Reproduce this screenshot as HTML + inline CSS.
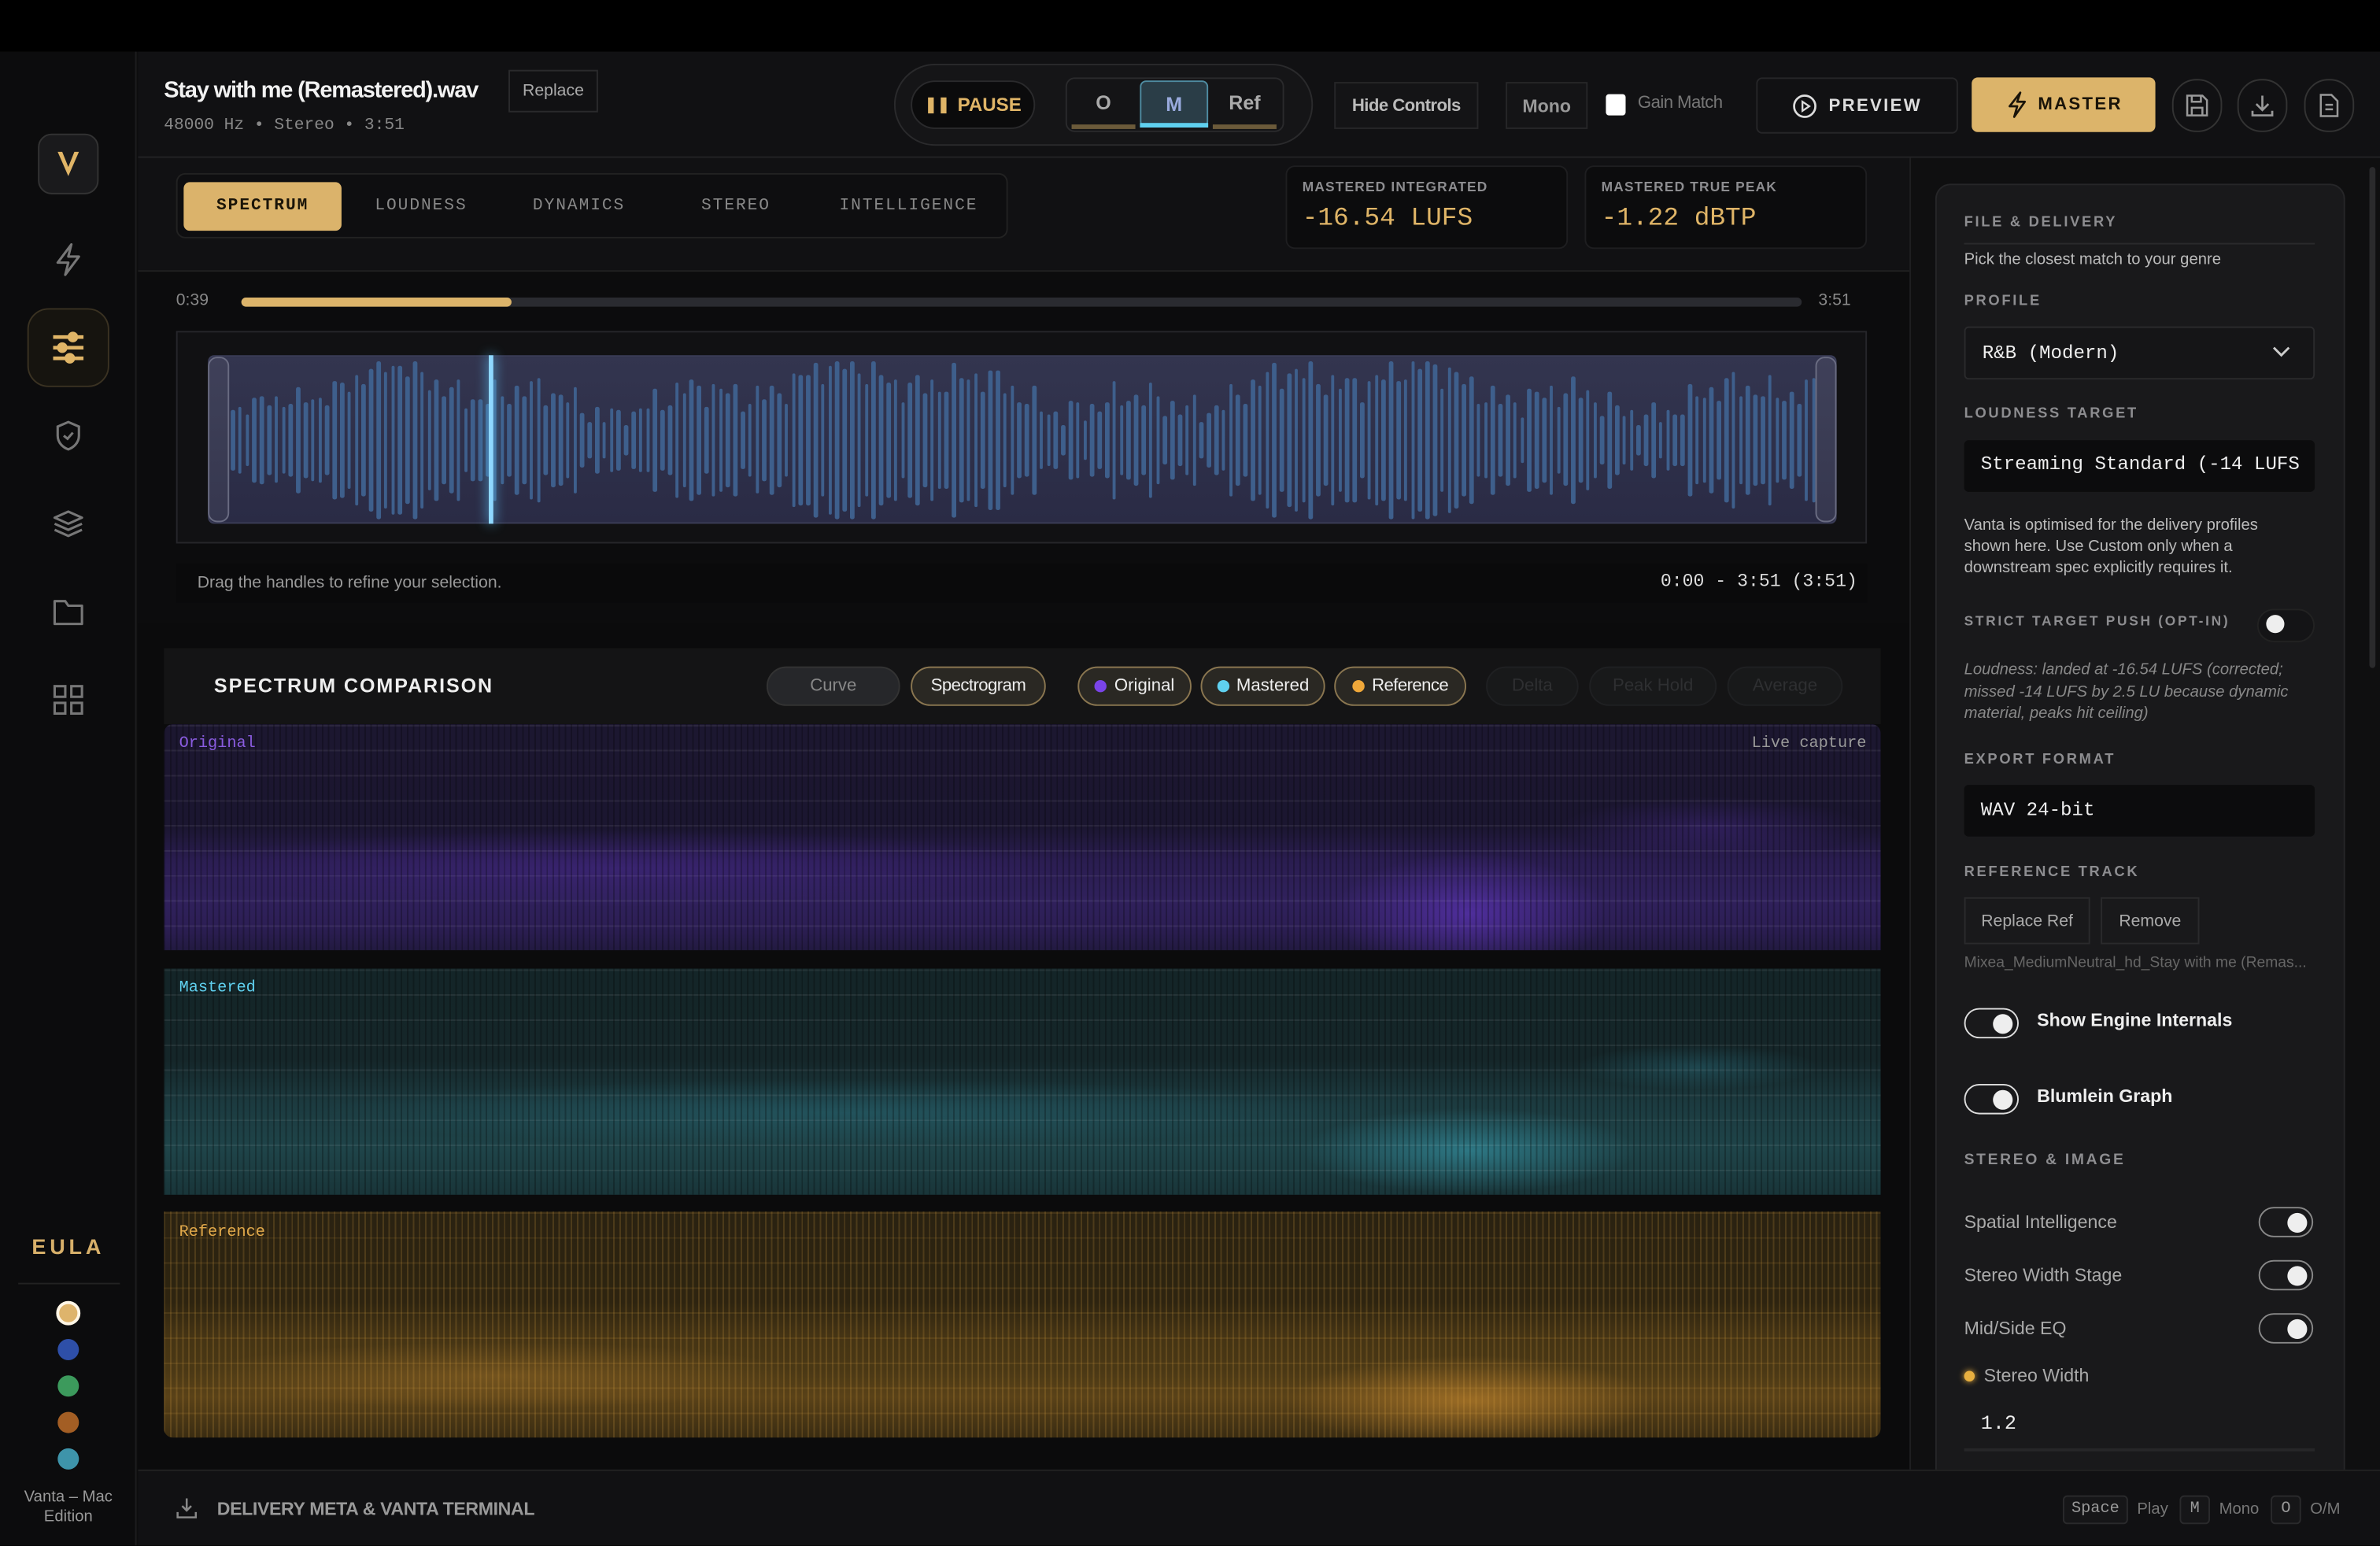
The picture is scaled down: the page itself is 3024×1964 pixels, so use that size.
<!DOCTYPE html>
<html><head><meta charset="utf-8">
<style>
*{box-sizing:border-box;margin:0;padding:0}
html,body{width:3024px;height:1964px;overflow:hidden;background:#000}
#s{width:1568px;height:1018px;transform:scale(1.92857);transform-origin:0 0;position:relative;background:#0d0d0e;font-family:"Liberation Sans",sans-serif;color:#ddd}
.a{position:absolute}
.mono{font-family:"Liberation Mono",monospace}
.lbl{font-size:9.5px;font-weight:bold;letter-spacing:1.4px;color:#8d8d90}
.pill{position:absolute;height:26px;border-radius:13px;font-size:11.5px;display:flex;align-items:center;justify-content:center;gap:5px}
.dot{width:8px;height:8px;border-radius:50%}
.tg{position:absolute;width:36px;height:20px;border-radius:10px;border:1.5px solid #888}
.tg:after{content:"";position:absolute;right:3px;top:2.5px;width:13px;height:13px;border-radius:50%;background:#eee}
.grid{background-image:repeating-linear-gradient(90deg,rgba(0,0,0,.25) 0 1px,transparent 1px 4px),repeating-linear-gradient(0deg,transparent 0 15.5px,rgba(255,255,255,.07) 15.5px 16.5px)}
</style></head><body><div id="s">
<div class="a" style="left:0;top:0;width:1568px;height:34px;background:#000"></div>
<div class="a" style="left:0;top:34px;width:90px;height:984px;background:#0c0c0d;border-right:1px solid #1d1d1f"></div>
<div class="a" style="left:25px;top:88px;width:40px;height:40px;border-radius:9px;background:#1a1a1c;border:1px solid #333;display:flex;align-items:center;justify-content:center">
<svg width="22" height="22" viewBox="0 0 22 22"><path d="M4 3 L11 19 L18 3 L15 3 L11 13 L7 3Z" fill="#e0b567"/></svg></div>
<svg class="a" style="left:34px;top:159px" width="22" height="24" viewBox="0 0 22 24"><path d="M13 2 L4 14 L11 14 L9 22 L18 10 L11 10Z" fill="none" stroke="#777" stroke-width="1.6" stroke-linejoin="round"/></svg>
<div class="a" style="left:18px;top:203px;width:54px;height:52px;border-radius:14px;border:1px solid #3a3222;background:#16140f"></div>
<svg class="a" style="left:33px;top:217px" width="24" height="24" viewBox="0 0 24 24"><g stroke="#e0b567" stroke-width="2.4"><line x1="2" y1="5" x2="22" y2="5"/><line x1="2" y1="12" x2="22" y2="12"/><line x1="2" y1="19" x2="22" y2="19"/></g><circle cx="15" cy="5" r="3.5" fill="#e0b567"/><circle cx="8" cy="12" r="3.5" fill="#e0b567"/><circle cx="13" cy="19" r="3.5" fill="#e0b567"/></svg>
<svg class="a" style="left:35px;top:276px" width="20" height="22" viewBox="0 0 20 22"><path d="M10 2 L17 5 V11 C17 16 13 19 10 20 C7 19 3 16 3 11 V5Z" fill="none" stroke="#777" stroke-width="1.6"/><path d="M7 11 L9.5 13 L13 9" fill="none" stroke="#777" stroke-width="1.6"/></svg>
<svg class="a" style="left:34px;top:335px" width="22" height="20" viewBox="0 0 22 20"><path d="M11 2 L20 6 L11 10 L2 6Z M2 10 L11 14 L20 10 M2 14 L11 18 L20 14" fill="none" stroke="#777" stroke-width="1.6" stroke-linejoin="round"/></svg>
<svg class="a" style="left:34px;top:393px" width="22" height="20" viewBox="0 0 22 20"><path d="M2 3 H9 L11 6 H20 V18 H2Z" fill="none" stroke="#777" stroke-width="1.6" stroke-linejoin="round"/></svg>
<svg class="a" style="left:35px;top:451px" width="20" height="20" viewBox="0 0 20 20"><g fill="none" stroke="#777" stroke-width="1.6"><rect x="1" y="1" width="7" height="7"/><rect x="12" y="1" width="7" height="7"/><rect x="1" y="12" width="7" height="7"/><rect x="12" y="12" width="7" height="7"/></g></svg>
<div class="a" style="left:0;top:813px;width:90px;text-align:center;font-size:14px;font-weight:bold;letter-spacing:2.5px;color:#d8b06a">EULA</div>
<div class="a" style="left:12px;top:845px;width:67px;height:1px;background:#222"></div>
<div class="a dot" style="left:37px;top:857px;width:16px;height:16px;background:#deb46c;border:2px solid #fff6e6"></div>
<div class="a dot" style="left:38px;top:882px;width:14px;height:14px;background:#2e4fa8"></div>
<div class="a dot" style="left:38px;top:906px;width:14px;height:14px;background:#3c9a5c"></div>
<div class="a dot" style="left:38px;top:930px;width:14px;height:14px;background:#a35e24"></div>
<div class="a dot" style="left:38px;top:954px;width:14px;height:14px;background:#3e94aa"></div>
<div class="a" style="left:0;top:980px;width:90px;text-align:center;font-size:10.5px;color:#999;line-height:13px">Vanta – Mac<br>Edition</div>

<div class="a" style="left:91px;top:34px;width:1477px;height:70px;background:#111113;border-bottom:1px solid #232325"></div>
<div class="a" style="left:108px;top:51px;font-size:15px;font-weight:bold;color:#f2f2f2;letter-spacing:-0.6px">Stay with me (Remastered).wav</div>
<div class="a" style="left:335px;top:46px;width:59px;height:28px;border:1px solid #2a2a2c;font-size:11px;color:#aaa;display:flex;align-items:center;justify-content:center">Replace</div>
<div class="a mono" style="left:108px;top:77px;font-size:11px;color:#888">48000 Hz • Stereo • 3:51</div>
<div class="a" style="left:589px;top:42px;width:276px;height:54px;border-radius:27px;border:1px solid #2a2a2c;background:#151517"></div>
<div class="a" style="left:600px;top:53px;width:82px;height:32px;border-radius:16px;background:#0b0b0c;border:1px solid #2a2a2c;color:#e0b567;font-weight:bold;font-size:12.5px;display:flex;align-items:center;justify-content:center;gap:5px"><span style="font-size:10px">❚❚</span>PAUSE</div>
<div class="a" style="left:702px;top:51px;width:144px;height:36px;border-radius:6px;border:1px solid #2a2a2c;background:#141416"></div>
<div class="a" style="left:705px;top:60px;width:44px;text-align:center;font-size:13px;font-weight:bold;color:#aaa">O</div>
<div class="a" style="left:706px;top:82px;width:42px;height:3px;background:#6b5a3a"></div>
<div class="a" style="left:751px;top:53px;width:45px;height:31px;border-radius:4px;background:#2a3d47;border:1px solid #4f8ca2;color:#9ad;font-weight:bold;font-size:13px;display:flex;align-items:center;justify-content:center">M</div>
<div class="a" style="left:751px;top:81px;width:45px;height:3px;background:#5fd0ef"></div>
<div class="a" style="left:798px;top:60px;width:44px;text-align:center;font-size:13px;font-weight:bold;color:#aaa">Ref</div>
<div class="a" style="left:799px;top:82px;width:42px;height:3px;background:#6b5a3a"></div>
<div class="a" style="left:879px;top:54px;width:95px;height:31px;border:1px solid #262628;background:#141416;font-size:11.5px;font-weight:bold;color:#bbb;display:flex;align-items:center;justify-content:center;letter-spacing:-0.3px">Hide Controls</div>
<div class="a" style="left:992px;top:54px;width:54px;height:31px;border:1px solid #262628;background:#141416;font-size:12px;font-weight:bold;color:#999;display:flex;align-items:center;justify-content:center">Mono</div>
<div class="a" style="left:1058px;top:62px;width:13px;height:14px;border-radius:2px;background:#fff"></div>
<div class="a" style="left:1079px;top:62px;font-size:11.5px;color:#777;letter-spacing:-0.3px">Gain Match</div>
<div class="a" style="left:1157px;top:51px;width:133px;height:37px;border-radius:4px;border:1px solid #262628;background:#111113;color:#ddd;font-size:11.5px;font-weight:bold;letter-spacing:1.2px;display:flex;align-items:center;justify-content:center;gap:8px"><svg width="16" height="16" viewBox="0 0 16 16"><circle cx="8" cy="8" r="7" fill="none" stroke="#ddd" stroke-width="1.4"/><path d="M6.5 5 L11 8 L6.5 11Z" fill="none" stroke="#ddd" stroke-width="1.2"/></svg>PREVIEW</div>
<div class="a" style="left:1299px;top:51px;width:121px;height:36px;border-radius:4px;background:#dcb46a;color:#1a1409;font-size:11.5px;font-weight:bold;letter-spacing:1.2px;display:flex;align-items:center;justify-content:center;gap:6px"><svg width="16" height="18" viewBox="0 0 16 18"><path d="M10 1 L3 10 L8 10 L6 17 L13 7 L8 7Z" fill="none" stroke="#1a1409" stroke-width="1.4" stroke-linejoin="round"/></svg>MASTER</div>
<div class="a" style="left:1431px;top:52px;width:33px;height:35px;border-radius:16px;border:1px solid #333;display:flex;align-items:center;justify-content:center"><svg width="17" height="17" viewBox="0 0 17 17"><path d="M2 2 H12 L15 5 V15 H2Z M5 2 V6 H11 V2 M5 15 V10 H12 V15" fill="none" stroke="#999" stroke-width="1.3"/></svg></div>
<div class="a" style="left:1474px;top:52px;width:33px;height:35px;border-radius:16px;border:1px solid #333;display:flex;align-items:center;justify-content:center"><svg width="17" height="17" viewBox="0 0 17 17"><path d="M8.5 2 V11 M4.5 7.5 L8.5 11.5 L12.5 7.5 M2 12 V15 H15 V12" fill="none" stroke="#999" stroke-width="1.4"/></svg></div>
<div class="a" style="left:1518px;top:52px;width:33px;height:35px;border-radius:16px;border:1px solid #333;display:flex;align-items:center;justify-content:center"><svg width="17" height="17" viewBox="0 0 17 17"><path d="M3 1.5 H10 L14 5.5 V15.5 H3Z M6 8 H11 M6 11 H11" fill="none" stroke="#999" stroke-width="1.3"/></svg></div>

<div class="a" style="left:91px;top:104px;width:1167px;height:306px;background:#111113;border-bottom:1px solid #1f1f21"></div>
<div class="a" style="left:116px;top:114px;width:548px;height:43px;border-radius:6px;border:1px solid #222;background:#0e0e10"></div>
<div class="a mono" style="left:121px;top:120px;width:104px;height:32px;border-radius:4px;background:#dbb36b;color:#1a1408;font-size:11px;font-weight:bold;letter-spacing:1px;display:flex;align-items:center;justify-content:center">SPECTRUM</div>
<div class="a mono" style="left:247px;top:130px;font-size:11px;letter-spacing:1px;color:#888">LOUDNESS</div>
<div class="a mono" style="left:351px;top:130px;font-size:11px;letter-spacing:1px;color:#888">DYNAMICS</div>
<div class="a mono" style="left:462px;top:130px;font-size:11px;letter-spacing:1px;color:#888">STEREO</div>
<div class="a mono" style="left:553px;top:130px;font-size:11px;letter-spacing:1px;color:#888">INTELLIGENCE</div>
<div class="a" style="left:847px;top:109px;width:186px;height:55px;border-radius:6px;background:#0c0c0d;border:1px solid #1e1e20"></div>
<div class="a lbl" style="left:858px;top:118px;font-size:9px;letter-spacing:.6px">MASTERED INTEGRATED</div>
<div class="a mono" style="left:858px;top:135px;font-size:17px;color:#e0b567">-16.54 LUFS</div>
<div class="a" style="left:1044px;top:109px;width:186px;height:55px;border-radius:6px;background:#0c0c0d;border:1px solid #1e1e20"></div>
<div class="a lbl" style="left:1055px;top:118px;font-size:9px;letter-spacing:.6px">MASTERED TRUE PEAK</div>
<div class="a mono" style="left:1055px;top:135px;font-size:17px;color:#e0b567">-1.22 dBTP</div>
<div class="a" style="left:91px;top:178px;width:1167px;height:1px;background:#222"></div>
<div class="a" style="left:91px;top:179px;width:1167px;height:231px;background:#0c0c0d"></div>
<div class="a" style="left:116px;top:192px;font-size:11px;color:#888">0:39</div>
<div class="a" style="left:159px;top:196px;width:1028px;height:6px;border-radius:3px;background:#2a2b30"></div>
<div class="a" style="left:159px;top:196px;width:178px;height:6px;border-radius:3px;background:#dcb46a"></div>
<div class="a" style="left:1198px;top:192px;font-size:11px;color:#888">3:51</div>
<div class="a" style="left:116px;top:218px;width:1114px;height:140px;background:#111113;border:1px solid #26262a"></div>
<div id="wf" class="a" style="left:137px;top:234px;width:1073px;height:111px;border-radius:4px;background:linear-gradient(#33354f,#2a2b45);border:1px solid #3b3d58;overflow:hidden"></div>
<div class="a" style="left:137px;top:235px;width:14px;height:109px;border-radius:6px;border:1px solid #6a6c82;background:rgba(255,255,255,.06)"></div>
<div class="a" style="left:1196px;top:235px;width:14px;height:109px;border-radius:6px;border:1px solid #6a6c82;background:rgba(255,255,255,.06)"></div>
<div class="a" style="left:322px;top:234px;width:3px;height:111px;background:#8fd8ff;box-shadow:0 0 8px #5fc8ff"></div>
<div class="a" style="left:116px;top:371px;width:1114px;height:26px;background:#0a0a0b"></div>
<div class="a" style="left:130px;top:378px;font-size:11px;color:#999">Drag the handles to refine your selection.</div>
<div class="a mono" style="left:1094px;top:376px;font-size:12px;color:#ddd">0:00 - 3:51 (3:51)</div>

<div class="a" style="left:91px;top:410px;width:1167px;height:558px;background:#0b0b0c"></div>
<div class="a" style="left:108px;top:427px;width:1131px;height:50px;background:#141415"></div>
<div class="a" style="left:141px;top:444px;font-size:13px;font-weight:bold;letter-spacing:1px;color:#eee">SPECTRUM COMPARISON</div>
<div class="pill" style="left:505px;top:439px;width:88px;background:#26272a;border:1px solid #333;color:#888">Curve</div>
<div class="pill" style="left:600px;top:439px;width:89px;background:#2a2823;border:1.5px solid #8a7650;color:#eee;letter-spacing:-0.3px">Spectrogram</div>
<div class="pill" style="left:710px;top:439px;width:75px;background:#2a2823;border:1.5px solid #8a7650;color:#eee"><span class="dot" style="background:#7a44e8"></span>Original</div>
<div class="pill" style="left:791px;top:439px;width:82px;background:#2a2823;border:1.5px solid #8a7650;color:#eee"><span class="dot" style="background:#5fd0ef"></span>Mastered</div>
<div class="pill" style="left:879px;top:439px;width:87px;background:#2a2823;border:1.5px solid #8a7650;color:#eee;letter-spacing:-0.3px"><span class="dot" style="background:#f0a83a"></span>Reference</div>
<div class="pill" style="left:979px;top:439px;width:61px;background:#18191a;border:1px solid #1f2022;color:#2e2f31">Delta</div>
<div class="pill" style="left:1047px;top:439px;width:84px;background:#18191a;border:1px solid #1f2022;color:#2e2f31">Peak Hold</div>
<div class="pill" style="left:1138px;top:439px;width:76px;background:#18191a;border:1px solid #1f2022;color:#2e2f31">Average</div>

<div class="a" style="left:108px;top:477px;width:1131px;height:149px;border-radius:6px 6px 0 0;background:radial-gradient(ellipse 90px 40px at 860px 125px,rgba(110,60,220,.5),transparent),radial-gradient(ellipse 300px 25px at 300px 95px,rgba(90,50,180,.3),transparent),radial-gradient(ellipse 100px 20px at 1020px 68px,rgba(90,50,180,.3),transparent),linear-gradient(#1c1730 0%,#1b1630 45%,#2a1d50 60%,#30215c 78%,#2c1e54 90%,#221a40 100%);overflow:hidden"><div class="a grid" style="inset:0"></div></div>
<div class="a mono" style="left:118px;top:484px;font-size:10.5px;color:#8a5ce0">Original</div>
<div class="a mono" style="left:1154px;top:484px;font-size:10.5px;color:#999">Live capture</div>

<div class="a" style="left:108px;top:638px;width:1131px;height:149px;background:radial-gradient(ellipse 110px 28px at 860px 120px,rgba(60,170,190,.5),transparent),radial-gradient(ellipse 350px 22px at 450px 95px,rgba(50,140,160,.28),transparent),radial-gradient(ellipse 80px 15px at 1010px 65px,rgba(50,140,160,.3),transparent),linear-gradient(#142528 0%,#152629 40%,#1c3b40 60%,#1f4449 80%,#193539 100%);overflow:hidden"><div class="a grid" style="inset:0"></div></div>
<div class="a mono" style="left:118px;top:645px;font-size:10.5px;color:#5fd0ef">Mastered</div>

<div class="a" style="left:108px;top:798px;width:1131px;height:149px;border-radius:0 0 6px 6px;background:radial-gradient(ellipse 120px 30px at 860px 125px,rgba(220,150,50,.5),transparent),radial-gradient(ellipse 200px 22px at 220px 108px,rgba(200,140,50,.3),transparent),linear-gradient(#2a2211 0%,#2e2410 40%,#453414 55%,#4a3815 70%,#5a4218 82%,#3a2c12 100%);overflow:hidden"><div class="a grid" style="inset:0;background-image:repeating-linear-gradient(90deg,rgba(230,170,70,.18) 0 1px,transparent 1px 4px),repeating-linear-gradient(0deg,transparent 0 15.5px,rgba(230,170,70,.12) 15.5px 16.5px)"></div></div>
<div class="a mono" style="left:118px;top:806px;font-size:10.5px;color:#e0a84a">Reference</div>

<div class="a" style="left:1258px;top:104px;width:310px;height:864px;background:#0f0f10;border-left:1px solid #1f1f21"></div>
<div class="a" style="left:1275px;top:121px;width:270px;height:850px;border-radius:10px 10px 0 0;background:#19191b;border:1px solid #262628"></div>
<div class="a" style="left:1561px;top:110px;width:4px;height:330px;border-radius:2px;background:#2a2a2c"></div>
<div class="a lbl" style="left:1294px;top:141px">FILE &amp; DELIVERY</div>
<div class="a" style="left:1294px;top:160px;width:231px;height:1px;background:#2a2a2c"></div>
<div class="a" style="left:1294px;top:165px;font-size:10.5px;color:#bbb">Pick the closest match to your genre</div>
<div class="a lbl" style="left:1294px;top:193px">PROFILE</div>
<div class="a mono" style="left:1294px;top:215px;width:231px;height:35px;border-radius:3px;background:#151517;border:1px solid #2a2a2c;font-size:12.5px;color:#eee;padding:10px 0 0 11px">R&amp;B (Modern)</div>
<svg class="a" style="left:1497px;top:227px" width="12" height="10" viewBox="0 0 12 10"><path d="M1 2 L6 7 L11 2" fill="none" stroke="#ccc" stroke-width="1.5"/></svg>
<div class="a lbl" style="left:1294px;top:267px">LOUDNESS TARGET</div>
<div class="a mono" style="left:1294px;top:290px;width:231px;height:34px;border-radius:3px;background:#0c0c0d;font-size:12.5px;color:#eee;padding:9px 0 0 11px;overflow:hidden;white-space:nowrap">Streaming Standard (-14 LUFS</div>
<div class="a" style="left:1294px;top:339px;width:225px;font-size:10.5px;line-height:14px;color:#bbb">Vanta is optimised for the delivery profiles shown here. Use Custom only when a downstream spec explicitly requires it.</div>
<div class="a lbl" style="left:1294px;top:404px;font-size:9px">STRICT TARGET PUSH (OPT-IN)</div>
<div class="a" style="left:1487px;top:401px;width:38px;height:22px;border-radius:11px;background:#141416;border:1px solid #222"></div>
<div class="a dot" style="left:1493px;top:405px;width:12px;height:12px;background:#eee"></div>
<div class="a" style="left:1294px;top:434px;width:235px;font-size:10.5px;line-height:14.5px;color:#888;font-style:italic">Loudness: landed at -16.54 LUFS (corrected; missed -14 LUFS by 2.5 LU because dynamic material, peaks hit ceiling)</div>
<div class="a lbl" style="left:1294px;top:495px">EXPORT FORMAT</div>
<div class="a mono" style="left:1294px;top:517px;width:231px;height:34px;border-radius:3px;background:#0c0c0d;font-size:12.5px;color:#eee;padding:10px 0 0 11px">WAV 24-bit</div>
<div class="a lbl" style="left:1294px;top:569px">REFERENCE TRACK</div>
<div class="a" style="left:1294px;top:591px;width:83px;height:31px;border:1px solid #2a2a2c;font-size:11px;color:#aaa;display:flex;align-items:center;justify-content:center">Replace Ref</div>
<div class="a" style="left:1384px;top:591px;width:65px;height:31px;border:1px solid #2a2a2c;font-size:11px;color:#aaa;display:flex;align-items:center;justify-content:center">Remove</div>
<div class="a" style="left:1294px;top:629px;width:232px;font-size:10px;color:#666;white-space:nowrap;overflow:hidden">Mixea_MediumNeutral_hd_Stay with me (Remas...</div>
<div class="tg" style="left:1294px;top:664px;border-color:#ddd"></div>
<div class="a" style="left:1342px;top:665px;font-size:12px;font-weight:bold;color:#eee">Show Engine Internals</div>
<div class="tg" style="left:1294px;top:714px;border-color:#ddd"></div>
<div class="a" style="left:1342px;top:715px;font-size:12px;font-weight:bold;color:#eee">Blumlein Graph</div>
<div class="a lbl" style="left:1294px;top:759px;font-size:10px">STEREO &amp; IMAGE</div>
<div class="a" style="left:1294px;top:798px;font-size:12px;color:#aaa">Spatial Intelligence</div>
<div class="tg" style="left:1488px;top:795px"></div>
<div class="a" style="left:1294px;top:833px;font-size:12px;color:#aaa">Stereo Width Stage</div>
<div class="tg" style="left:1488px;top:830px"></div>
<div class="a" style="left:1294px;top:868px;font-size:12px;color:#aaa">Mid/Side EQ</div>
<div class="tg" style="left:1488px;top:865px"></div>
<div class="a dot" style="left:1294px;top:903px;width:7px;height:7px;background:#e8b040;box-shadow:0 0 4px #e8b040"></div>
<div class="a" style="left:1307px;top:899px;font-size:12px;color:#aaa">Stereo Width</div>
<div class="a mono" style="left:1305px;top:930px;font-size:13px;color:#eee">1.2</div>
<div class="a" style="left:1294px;top:954px;width:231px;height:2px;background:#262628"></div>

<div class="a" style="left:91px;top:968px;width:1477px;height:50px;background:#111113;border-top:1px solid #222"></div>
<svg class="a" style="left:116px;top:986px" width="14" height="15" viewBox="0 0 14 15"><path d="M7 1 V9 M4 6 L7 9 L10 6 M1 10 V13.5 H13 V10" fill="none" stroke="#888" stroke-width="1.3"/></svg>
<div class="a" style="left:143px;top:987px;font-size:12px;font-weight:bold;color:#999;letter-spacing:-0.2px">DELIVERY META &amp; VANTA TERMINAL</div>
<div class="a mono" style="left:1359px;top:985px;width:43px;height:19px;border:1px solid #2a2a2c;border-radius:3px;background:#161618;font-size:10.5px;color:#999;text-align:center;line-height:17px">Space</div>
<div class="a" style="left:1408px;top:988px;font-size:10.5px;color:#777">Play</div>
<div class="a mono" style="left:1436px;top:985px;width:20px;height:19px;border:1px solid #2a2a2c;border-radius:3px;background:#161618;font-size:10.5px;color:#999;text-align:center;line-height:17px">M</div>
<div class="a" style="left:1462px;top:988px;font-size:10.5px;color:#777">Mono</div>
<div class="a mono" style="left:1496px;top:985px;width:20px;height:19px;border:1px solid #2a2a2c;border-radius:3px;background:#161618;font-size:10.5px;color:#999;text-align:center;line-height:17px">O</div>
<div class="a" style="left:1522px;top:988px;font-size:10.5px;color:#777">O/M</div>
</div>
<script>
var wf=document.getElementById('wf'),h='';
for(var i=0;i<220;i++){var x=14+i*4.8;if(x>1060)break;
var env=0.55+0.18*Math.sin(i*0.09)+0.12*Math.sin(i*0.31+1)+0.12*Math.sin(i*2.3)+0.08*Math.sin(i*5.1);
if(i<20)env*=0.5+i/40;
var hh=Math.max(20,Math.min(104,env*120));
h+='<div style="position:absolute;left:'+x+'px;top:'+(55-hh/2)+'px;width:2.6px;height:'+hh+'px;border-radius:1.3px;background:#3e5f8c"></div>';}
wf.innerHTML=h;
</script>
</body></html>
